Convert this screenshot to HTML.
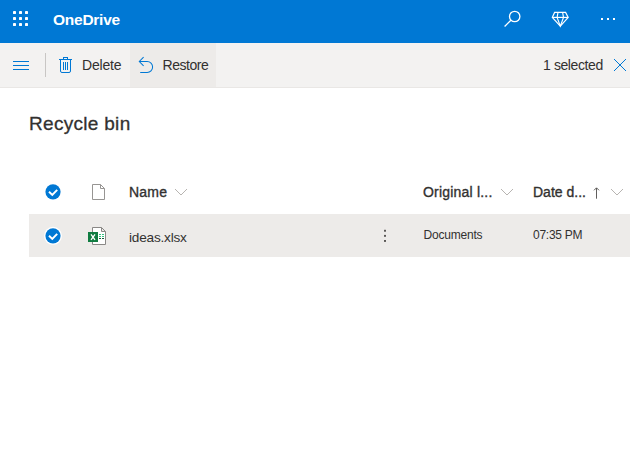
<!DOCTYPE html>
<html><head><meta charset="utf-8">
<style>
*{margin:0;padding:0;box-sizing:border-box}
html,body{width:630px;height:465px;overflow:hidden;background:#fff;font-family:"Liberation Sans",sans-serif;color:#323130}
.abs{position:absolute}
#hdr{left:0;top:0;width:630px;height:43px;background:#0078d4}
#bar{left:0;top:43px;width:630px;height:44px;background:#f3f2f1}
#barline{left:0;top:87px;width:630px;height:1px;background:#e9e7e5}
#restorebg{left:130px;top:43px;width:86px;height:44px;background:#edebe9}
#row{left:29px;top:214px;width:601px;height:43px;background:#edebe9}
.t{position:absolute;white-space:nowrap;line-height:1}
svg{position:absolute;overflow:visible}
.sb{font-size:14px;-webkit-text-stroke:0.35px #323130;letter-spacing:0.2px}
</style></head><body>
<div id="hdr" class="abs"></div>
<div id="bar" class="abs"></div>
<div id="barline" class="abs"></div>
<div id="restorebg" class="abs"></div>
<div id="row" class="abs"></div>

<!-- waffle -->
<svg style="left:0;top:0" width="630" height="43">
<g fill="#fff">
<rect x="13" y="11" width="3" height="3" rx="0.4"/><rect x="19" y="11" width="3" height="3" rx="0.4"/><rect x="25" y="11" width="3" height="3" rx="0.4"/>
<rect x="13" y="17" width="3" height="3" rx="0.4"/><rect x="19" y="17" width="3" height="3" rx="0.4"/><rect x="25" y="17" width="3" height="3" rx="0.4"/>
<rect x="13" y="23" width="3" height="3" rx="0.4"/><rect x="19" y="23" width="3" height="3" rx="0.4"/><rect x="25" y="23" width="3" height="3" rx="0.4"/>
</g>
<!-- search -->
<g stroke="#fff" stroke-width="1.3" fill="none">
<circle cx="514.7" cy="16.5" r="5.2"/>
<line x1="510.9" y1="20.3" x2="504.6" y2="26.5"/>
</g>
<!-- diamond -->
<g stroke="#fff" stroke-width="1.15" fill="none" stroke-linejoin="miter">
<path d="M554.6 12.4 L565.6 12.4 L568.2 17.4 L560.3 26.1 L552.3 17.4 Z"/>
<path d="M552.3 17.4 L568.2 17.4"/>
<path d="M558 12.4 L557.1 17.4 L560.3 26.1 L563.5 17.4 L562.6 12.4"/>
</g>
<g fill="#fff">
<rect x="601" y="18" width="2" height="2"/><rect x="607" y="18" width="2" height="2"/><rect x="613" y="18" width="2" height="2"/>
</g>
</svg>
<div class="t" style="left:53px;top:12px;font-size:15.5px;font-weight:bold;color:#fff;letter-spacing:-0.25px">OneDrive</div>

<!-- toolbar -->
<svg style="left:0;top:43px" width="630" height="44">
<g fill="#0078d4">
<rect x="13" y="18" width="16" height="1"/>
<rect x="13" y="22" width="16" height="1"/>
<rect x="13" y="26" width="16" height="1"/>
</g>
<rect x="45" y="10" width="1" height="24" fill="#c8c6c4"/>
<!-- trash -->
<g fill="#0078d4">
<rect x="59" y="16" width="13" height="1"/>
<rect x="63" y="14" width="5" height="1"/>
<rect x="63" y="14" width="1" height="2"/><rect x="67" y="14" width="1" height="2"/>
<rect x="63" y="19" width="1" height="8"/><rect x="65" y="19" width="1" height="8"/><rect x="67" y="19" width="1" height="8"/>
</g>
<path d="M60.5 16.5 V28 Q60.5 29.5 62 29.5 H69 Q70.5 29.5 70.5 28 V16.5" stroke="#0078d4" stroke-width="1" fill="none"/>
<!-- undo -->
<g stroke="#0078d4" stroke-width="1.05" fill="none">
<path d="M139.5 18.5 H147.2 A5.4 5.5 0 0 1 147.2 29.5 H140.2"/>
<path d="M143.6 14.2 L139.3 18.5 L143.6 22.8"/>
</g>
<!-- X -->
<g stroke="#0078d4" stroke-width="1">
<line x1="614" y1="16" x2="626" y2="28"/><line x1="626" y1="16" x2="614" y2="28"/>
</g>
</svg>
<div class="t" style="left:82px;top:58px;font-size:14px;letter-spacing:-0.2px">Delete</div>
<div class="t" style="left:162.5px;top:58px;font-size:14px;letter-spacing:-0.45px">Restore</div>
<div class="t" style="left:543px;top:58px;font-size:14px;letter-spacing:-0.4px">1 selected</div>

<div class="t" style="left:29px;top:114px;font-size:19px;-webkit-text-stroke:0.3px #323130;letter-spacing:0.3px">Recycle bin</div>

<!-- list header -->
<svg style="left:0;top:0" width="630" height="465">
<circle cx="53" cy="191.8" r="7.6" fill="#0078d4"/>
<path d="M49 191.8 L52.3 194.9 L57.2 189.9" stroke="#fff" stroke-width="2" fill="none"/>
<path d="M92.5 184.5 H100.5 L104.5 188.5 V199.5 H92.5 Z M100.5 184.5 V188.5 H104.5" stroke="#979593" stroke-width="1" fill="#fff" stroke-linejoin="miter"/>
<path d="M175 189 L181 195 L187 189" stroke="#b3b0ad" stroke-width="0.95" fill="none"/>
<path d="M501 189 L507 195 L513 189" stroke="#b3b0ad" stroke-width="0.95" fill="none"/>
<path d="M611 189 L617 195 L623 189" stroke="#b3b0ad" stroke-width="0.95" fill="none"/>
<path d="M596.5 188 V198.7 M594 190.3 L596.5 187.8 L599 190.3" stroke="#605e5c" stroke-width="1" fill="none"/>

<!-- row -->
<circle cx="53" cy="235.8" r="9" fill="#fff"/>
<circle cx="53" cy="235.8" r="7.6" fill="#0078d4"/>
<path d="M49 235.8 L52.3 238.9 L57.2 233.9" stroke="#fff" stroke-width="2" fill="none"/>
<path d="M92.5 227.5 H101.5 L105.5 231.5 V244.5 H92.5 Z M101.5 227.5 V231.5 H105.5" stroke="#8a8886" stroke-width="1" fill="#fff"/>
<rect x="88" y="232" width="10" height="10" fill="#107c41"/>
<path d="M91 234.3 L95 239.8 M95 234.3 L91 239.8" stroke="#fff" stroke-width="1.3"/>
<g fill="#33c481"><rect x="99" y="234" width="2" height="1"/><rect x="102" y="234" width="2" height="1"/><rect x="99" y="236" width="2" height="1"/><rect x="102" y="236" width="2" height="1"/></g>
<g fill="#185c37"><rect x="99" y="238" width="2" height="1"/><rect x="102" y="238" width="2" height="1"/></g>
<g fill="#5a5856"><rect x="384" y="229.8" width="2" height="1.9"/><rect x="384" y="234.9" width="2" height="1.9"/><rect x="384" y="240" width="2" height="1.9"/></g>
</svg>
<div class="t sb" style="left:129px;top:185px;">Name</div>
<div class="t sb" style="left:423px;top:185px;">Original l...</div>
<div class="t sb" style="left:533px;top:185px;letter-spacing:0">Date d...</div>
<div class="t" style="left:129px;top:230.6px;font-size:13.6px;letter-spacing:-0.2px">ideas.xlsx</div>
<div class="t" style="left:423.5px;top:229px;font-size:12px;letter-spacing:-0.2px">Documents</div>
<div class="t" style="left:533px;top:229px;font-size:12px;letter-spacing:-0.25px">07:35 PM</div>
</body></html>
